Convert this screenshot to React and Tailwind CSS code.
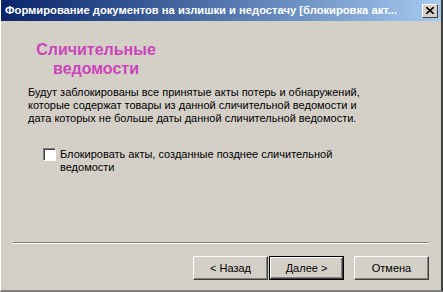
import React from 'react';

const font = { fontFamily: '"Liberation Sans", Arial, sans-serif' };

const Button = ({ children, isDefault }) => (
  <div
    className={`w-[75px] h-[24px] ${isDefault ? 'border border-black' : ''}`}
  >
    <div className="w-full h-full border-t border-l border-white border-r border-b border-r-[#404040] border-b-[#404040] bg-[#d4d0c8] shadow-[inset_-1px_-1px_0_#808080] flex items-center justify-center text-[11px] text-black">
      {children}
    </div>
  </div>
);

const App = () => {
  return (
    <div
      className="w-[443px] h-[292px] bg-[#d4d0c8] flex flex-col border-r-2 border-b-2 border-r-[#404040] border-b-[#808080] border-l border-l-white overflow-hidden"
      style={font}
    >
      <div className="h-[21px] flex items-center pl-[4px] pr-[3px] bg-gradient-to-r from-[#0a246a] to-[#a6caf0]">
        <div className="flex-1 text-white font-bold text-[11.2px] whitespace-nowrap overflow-hidden">
          Формирование документов на излишки и недостачу [блокировка акт...
        </div>
        <div className="w-[16px] h-[14px] bg-[#d4d0c8] border-t border-l border-white border-r border-b border-r-[#404040] border-b-[#404040] flex items-center justify-center ml-1">
          <svg width="8" height="7" viewBox="0 0 8 7">
            <path d="M0 0 L8 7 M8 0 L0 7" stroke="black" strokeWidth="1.6" />
          </svg>
        </div>
      </div>

      <div className="flex-1 flex flex-col">
        <div className="w-[190px] pt-[19px] text-center text-[#cc44bb] font-bold text-[16px] leading-[19px]">
          Сличительные
          <br />
          ведомости
        </div>

        <div className="pl-[27px] pt-[8px] text-[11px] leading-[13px] text-black">
          Будут заблокированы все принятые акты потерь и обнаружений,
          <br />
          которые содержат товары из данной сличительной ведомости и
          <br />
          дата которых не больше даты данной сличительной ведомости.
        </div>

        <div className="flex pl-[42px] pt-[22px] gap-[4px]">
          <div className="w-[13px] h-[13px] mt-[1px] bg-white border-t border-l border-[#808080] border-r border-b border-r-white border-b-white shadow-[inset_1px_1px_0_#404040]" />
          <div className="text-[11px] leading-[13px] text-black pt-[1px]">
            Блокировать акты, созданные позднее сличительной
            <br />
            ведомости
          </div>
        </div>

        <div className="mt-auto mx-[12px] border-t border-[#808080] border-b border-b-white" />

        <div className="flex justify-end gap-[10px] pr-[12px] pt-[12px] pb-[10px]">
          <div className="flex gap-[1px]">
            <Button>&lt; Назад</Button>
            <Button isDefault>Далее &gt;</Button>
          </div>
          <Button>Отмена</Button>
        </div>
      </div>
    </div>
  );
};

export default App;
